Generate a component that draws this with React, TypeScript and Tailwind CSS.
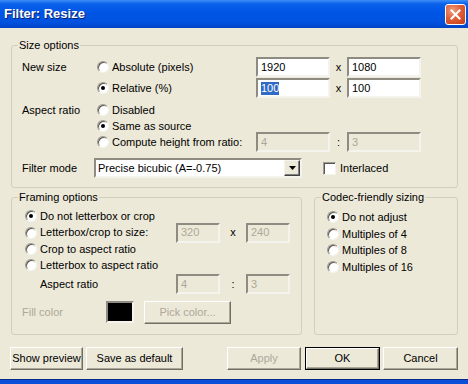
import React from 'react'

function Radio({ checked }: { checked?: boolean }) {
  return (
    <span className="flex h-[12px] w-[12px] shrink-0 items-center justify-center rounded-full border border-t-[#9d9a8f] border-l-[#9d9a8f] border-r-[#f4f3ee] border-b-[#f4f3ee] bg-white shadow-[inset_1px_1px_0_#5a5850]">
      {checked && <span className="h-[4px] w-[4px] rounded-full bg-black" />}
    </span>
  )
}

function Field({ value, disabled, wide, selected }: { value: string; disabled?: boolean; wide?: boolean; selected?: boolean }) {
  return (
    <div
      className={`flex h-[20px] items-center border-2 border-t-[#8d8b82] border-l-[#8d8b82] border-r-[#f4f3ee] border-b-[#f4f3ee] pl-[3px] ${wide ? 'w-[74px]' : 'w-[44px]'} ${disabled ? 'bg-[#ece9d8] text-[#aca899]' : 'bg-white text-black'}`}
    >
      <span className={selected ? 'bg-[#316ac5] text-white leading-[13px]' : 'leading-[13px]'}>{value}</span>
    </div>
  )
}

function Btn({ label, w, disabled, def }: { label: string; w: string; disabled?: boolean; def?: boolean }) {
  return (
    <div className={`flex h-[23px] ${w} ${def ? 'border border-black' : ''}`}>
      <div
        className={`flex flex-1 items-center justify-center border border-t-white border-l-white border-r-[#716f64] border-b-[#716f64] bg-[#ece9d8] shadow-[inset_-1px_-1px_0_#aca899] ${disabled ? 'text-[#aca899]' : 'text-black'}`}
      >
        {label}
      </div>
    </div>
  )
}

function Group({ title, className, children }: { title: string; className: string; children: React.ReactNode }) {
  return (
    <div className={`relative rounded-[3px] border border-[#d0d0bf] ${className}`}>
      <span className="absolute -top-[7px] left-[6px] bg-[#ece9d8] px-[1px] leading-[13px]">{title}</span>
      {children}
    </div>
  )
}

export default function App() {
  return (
    <div className="flex h-[384px] w-[468px] flex-col overflow-hidden bg-[#ece9d8] font-['Liberation_Sans',Arial,sans-serif] text-[11px] text-black">
      {/* title bar */}
      <div className="flex h-[28px] shrink-0 items-center justify-between bg-[linear-gradient(to_bottom,#3d8ef8_0%,#0a61ea_14%,#0055e5_45%,#0052de_80%,#0043c8_100%)] pl-[4px] pr-[2px]">
        <span className="font-['Liberation_Sans',Arial,sans-serif] text-[13px] font-bold text-white [text-shadow:1px_1px_0_#0a1e6e]">Filter: Resize</span>
        <div className="flex h-[21px] w-[21px] items-center justify-center rounded-[3px] border border-white bg-[radial-gradient(circle_at_35%_30%,#f0a080_0%,#e0603a_45%,#c23c14_100%)]">
          <svg width="11" height="11" viewBox="0 0 11 11">
            <path d="M1.5 1.5 L9.5 9.5 M9.5 1.5 L1.5 9.5" stroke="white" strokeWidth="2" strokeLinecap="square" />
          </svg>
        </div>
      </div>

      <div className="flex flex-1 flex-col pl-[11px] pr-[10px] pt-[17px]">
        {/* Size options */}
        <Group title="Size options" className="h-[143px] w-[447px] pl-[10px] pt-[11px]">
          <div className="flex h-[20px] items-center">
            <span className="w-[75px]">New size</span>
            <div className="flex w-[159px] items-center gap-[3px]">
              <Radio />
              <span>Absolute (pixels)</span>
            </div>
            <Field value="1920" wide />
            <span className="w-[17px] text-center">x</span>
            <Field value="1080" wide />
          </div>
          <div className="mt-[1px] flex h-[20px] items-center">
            <span className="w-[75px]" />
            <div className="flex w-[159px] items-center gap-[3px]">
              <Radio checked />
              <span>Relative (%)</span>
            </div>
            <Field value="100" wide selected />
            <span className="w-[17px] text-center">x</span>
            <Field value="100" wide />
          </div>
          <div className="mt-[4px] flex h-[16px] items-center">
            <span className="w-[75px]">Aspect ratio</span>
            <div className="flex items-center gap-[3px]">
              <Radio />
              <span>Disabled</span>
            </div>
          </div>
          <div className="flex h-[16px] items-center">
            <span className="w-[75px]" />
            <div className="flex items-center gap-[3px]">
              <Radio checked />
              <span>Same as source</span>
            </div>
          </div>
          <div className="-mt-[2px] flex h-[20px] items-center">
            <span className="w-[75px]" />
            <div className="flex w-[159px] items-center gap-[3px]">
              <Radio />
              <span>Compute height from ratio:</span>
            </div>
            <Field value="4" wide disabled />
            <span className="w-[17px] text-center">:</span>
            <Field value="3" wide disabled />
          </div>
          <div className="mt-[6px] flex h-[20px] items-center">
            <span className="w-[72px]">Filter mode</span>
            <div className="flex h-[20px] w-[208px] items-center border-2 border-t-[#8d8b82] border-l-[#8d8b82] border-r-[#f4f3ee] border-b-[#f4f3ee] bg-white">
              <span className="flex-1 pl-[2px]">Precise bicubic (A=-0.75)</span>
              <div className="flex h-[16px] w-[16px] items-center justify-center border border-t-[#f4f3ee] border-l-[#f4f3ee] border-r-[#404040] border-b-[#404040] bg-[#ece9d8] shadow-[inset_-1px_-1px_0_#808080]">
                <svg width="7" height="4" viewBox="0 0 7 4">
                  <path d="M0 0 H7 L3.5 4 Z" fill="black" />
                </svg>
              </div>
            </div>
            <div className="ml-[21px] h-[13px] w-[13px] border border-t-[#9d9a8f] border-l-[#9d9a8f] border-r-[#f4f3ee] border-b-[#f4f3ee] bg-white shadow-[inset_1px_1px_0_#5a5850]" />
            <span className="ml-[4px]">Interlaced</span>
          </div>
        </Group>

        <div className="mt-[9px] flex gap-[12px]">
          {/* Framing options */}
          <Group title="Framing options" className="h-[138px] w-[291px] pl-[13px] pt-[10px]">
            <div className="flex h-[16px] items-center gap-[3px]">
              <Radio checked />
              <span>Do not letterbox or crop</span>
            </div>
            <div className="flex h-[17px] items-center">
              <div className="flex w-[151px] items-center gap-[3px]">
                <Radio />
                <span>Letterbox/crop to size:</span>
              </div>
              <Field value="320" disabled />
              <span className="w-[26px] text-center">x</span>
              <Field value="240" disabled />
            </div>
            <div className="flex h-[16px] items-center gap-[3px]">
              <Radio />
              <span>Crop to aspect ratio</span>
            </div>
            <div className="flex h-[16px] items-center gap-[3px]">
              <Radio />
              <span>Letterbox to aspect ratio</span>
            </div>
            <div className="mt-[1px] flex h-[20px] items-center">
              <span className="w-[151px] pl-[15px]">Aspect ratio</span>
              <Field value="4" disabled />
              <span className="w-[26px] text-center">:</span>
              <Field value="3" disabled />
            </div>
            <div className="mt-[7px] flex h-[22px] items-center">
              <span className="w-[84px] -ml-[3px] text-[#aca899]">Fill color</span>
              <div className="h-[22px] w-[28px] border-2 border-t-[#8d8b82] border-l-[#8d8b82] border-r-[#f4f3ee] border-b-[#f4f3ee] bg-black" />
              <div className="ml-[10px]">
                <Btn label="Pick color..." w="w-[87px]" disabled />
              </div>
            </div>
          </Group>

          {/* Codec-friendly sizing */}
          <Group title="Codec-friendly sizing" className="h-[138px] w-[144px] pl-[12px] pt-[11px]">
            {['Do not adjust', 'Multiples of 4', 'Multiples of 8', 'Multiples of 16'].map((t, i) => (
              <div key={t} className="flex h-[16.5px] items-center gap-[3px]">
                <Radio checked={i === 0} />
                <span>{t}</span>
              </div>
            ))}
          </Group>
        </div>

        <div className="mt-[12px] -ml-[1px] flex items-center">
          <Btn label="Show preview" w="w-[75px]" />
          <div className="ml-[3px]">
            <Btn label="Save as default" w="w-[97px]" />
          </div>
          <div className="ml-[44px]">
            <Btn label="Apply" w="w-[74px]" disabled />
          </div>
          <div className="ml-[4px]">
            <Btn label="OK" w="w-[75px]" def />
          </div>
          <div className="ml-[3px]">
            <Btn label="Cancel" w="w-[75px]" />
          </div>
        </div>
      </div>

      <div className="h-[5px] shrink-0 border-t border-[#0a2a8a] bg-[#0a4fd8]" />
    </div>
  )
}
